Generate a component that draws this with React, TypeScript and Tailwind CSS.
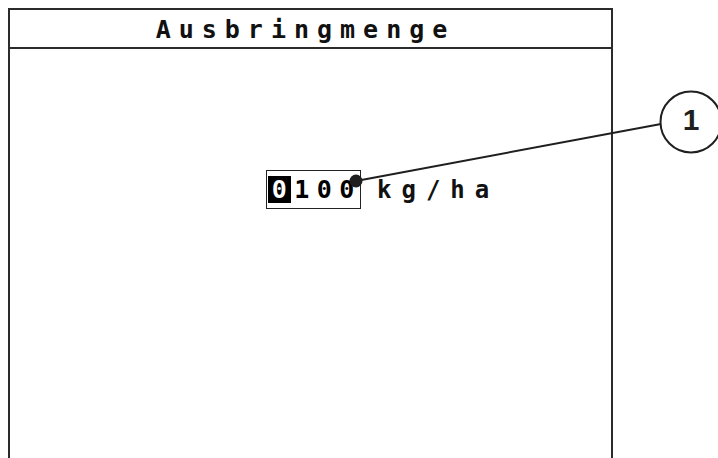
const lcd = { fontFamily: '"DejaVu Sans Mono", "Liberation Mono", monospace' };

function Digit({ value, active }: { value: string; active?: boolean }) {
  return (
    <span
      className={`flex h-[27px] w-[22.5px] items-center justify-center ${active ? 'bg-black text-white' : 'text-black'}`}
    >
      {value}
    </span>
  );
}

export default function App() {
  const digits = ['0', '1', '0', '0'];

  return (
    <div className="relative h-[458px] w-[718px] overflow-hidden bg-white">
      <div className="pl-2 pt-2">
        <div className="h-[470px] w-[605px] border-2 border-b-0 border-[#2b2b2b]">
          {/* Titelzeile */}
          <div className="flex h-[39px] items-center justify-center border-b-2 border-[#2b2b2b] pr-[10px] pt-[2px]">
            <span
              style={lcd}
              className="text-[25px] font-bold leading-none tracking-[8px] text-[#111]"
            >
              Ausbringmenge
            </span>
          </div>

          {/* Eingabefeld */}
          <div className="flex items-center pl-[256px] pt-[121px]" style={lcd}>
            <div className="flex h-[39px] items-center border-[1.5px] border-[#222] pl-[1px] pr-[2px] text-[25px] font-bold leading-none">
              {digits.map((d, i) => (
                <Digit key={i} value={d} active={i === 0} />
              ))}
            </div>
            <span className="ml-[16px] text-[24px] font-bold leading-none tracking-[10px] text-[#111]">
              kg/ha
            </span>
          </div>
        </div>
      </div>

      {/* Positionsnummer */}
      <svg className="absolute inset-0" width="718" height="458" viewBox="0 0 718 458">
        <line x1="356" y1="181" x2="661" y2="124" stroke="#1f1f1f" strokeWidth="2" />
        <circle cx="356" cy="181" r="6.5" fill="#1f1f1f" />
        <circle cx="691" cy="122" r="30.5" fill="white" stroke="#1f1f1f" strokeWidth="2" />
        <text
          x="691"
          y="130"
          textAnchor="middle"
          fontFamily='"Liberation Sans", Arial, sans-serif'
          fontWeight="bold"
          fontSize="30"
          fill="#1f1f1f"
        >
          1
        </text>
      </svg>
    </div>
  );
}
